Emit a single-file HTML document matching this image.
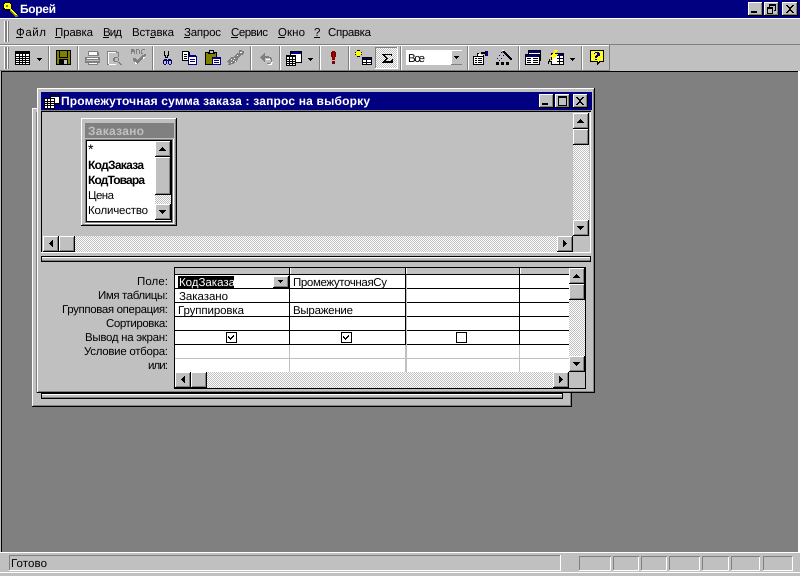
<!DOCTYPE html>
<html><head><meta charset="utf-8"><style>
html,body{margin:0;padding:0;background:#c0c0c0;overflow:hidden}
svg{display:block;position:absolute;left:0;top:0}
text{font-family:"Liberation Sans",sans-serif;font-size:11.5px;fill:#000;text-rendering:geometricPrecision}
.b{font-weight:bold;font-size:12px}
</style></head><body>
<svg width="800" height="576" viewBox="0 0 800 576" shape-rendering="crispEdges" xmlns="http://www.w3.org/2000/svg">
<defs>
<pattern id="d" width="2" height="2" patternUnits="userSpaceOnUse"><rect width="2" height="2" fill="#fff"/><rect width="1" height="1" fill="#c0c0c0"/><rect x="1" y="1" width="1" height="1" fill="#c0c0c0"/></pattern>
<g id="btn"><rect width="16" height="16" fill="#000"/><rect width="15" height="15" fill="#fff"/><rect x="1" y="1" width="14" height="14" fill="#808080"/><rect x="1" y="1" width="13" height="13" fill="#c0c0c0"/></g>
<g id="up"><use href="#btn"/><path d="M4 9h7v1h-7zM5 8h5v1h-5zM6 7h3v1h-3zM7 6h1v1h-1z"/></g>
<g id="dn"><use href="#btn"/><path d="M4 6h7v1h-7zM5 7h5v1h-5zM6 8h3v1h-3zM7 9h1v1h-1z"/></g>
<g id="lf"><use href="#btn"/><path d="M9 4v7h1v-7zM8 5v5h1v-5zM7 6v3h1v-3zM6 7v1h1v-1z"/></g>
<g id="rt"><use href="#btn"/><path d="M6 4v7h1v-7zM7 5v5h1v-5zM8 6v3h1v-3zM9 7v1h1v-1z"/></g>
<g id="tb"><rect width="15" height="14" fill="#000"/><path d="M1 3h13v10h-13z" fill="#fff"/><path d="M1 5h13v1h-13zM1 7h13v1h-13zM1 9h13v1h-13zM1 11h13v1h-13zM4 3h1v10h-1zM7 3h1v10h-1zM10 3h1v10h-1z" fill="#000"/></g>
<g id="mini"><path d="M0 0h5v1h-5zM1 1h3v1h-3zM2 2h1v1h-1z"/></g>
<g id="sep"><rect width="1" height="24" fill="#808080"/><rect x="1" width="1" height="24" fill="#fff"/></g>
</defs>

<!-- Application frame -->
<rect width="800" height="576" fill="#c0c0c0"/>
<rect width="800" height="18" fill="#000080"/>
<rect y="18" width="800" height="1" fill="#fff"/>
<rect y="44" width="800" height="1" fill="#808080"/>
<rect y="45" width="609" height="1" fill="#fff"/>
<rect x="609" y="45" width="1" height="26" fill="#808080"/>
<rect y="70" width="609" height="1" fill="#808080"/>

<!-- title -->
<g transform="translate(2,1)">
<path d="M2 1h6v1h2v6h-1v2h-6v-1h-2v-6h1z" fill="#000" opacity=".75"/>
<path d="M3 2h5v1h1v4h-1v1h-5v-1h-1v-4h1z" fill="#ffff00"/>
<path d="M4 4h2v2h-2z" fill="#808000"/>
<path d="M8 8h1v1h1v1h1v1h1v1h1v1h1v1h2v2h-3v-1h-1v-1h-1v-1h-1v-1h-1v-1h-1z" fill="#808000"/>
<path d="M8 7h1v1h1v1h1v1h1v1h1v1h1v1h1v1h-2v-1h-1v-1h-1v-1h-1v-1h-1z" fill="#ffff00"/>
</g>
<text x="20" y="13" class="b" style="fill:#fff" textLength="36">Борей</text>
<g transform="translate(748,2)"><rect width="15" height="14" fill="#000"/><rect width="14" height="13" fill="#fff"/><rect x="1" y="1" width="13" height="12" fill="#808080"/><rect x="1" y="1" width="12" height="11" fill="#c0c0c0"/><path d="M3 9h6v2h-6z"/></g>
<g transform="translate(764,2)"><rect width="15" height="14" fill="#000"/><rect width="14" height="13" fill="#fff"/><rect x="1" y="1" width="13" height="12" fill="#808080"/><rect x="1" y="1" width="12" height="11" fill="#c0c0c0"/><path d="M5 2h7v7h-2v-1h1v-4h-5v1h-1zM3 5h6v7h-6zM4 7v4h4v-4z" fill-rule="evenodd"/></g>
<g transform="translate(782,2)"><rect width="16" height="14" fill="#000"/><rect width="15" height="13" fill="#fff"/><rect x="1" y="1" width="14" height="12" fill="#808080"/><rect x="1" y="1" width="13" height="11" fill="#c0c0c0"/><path d="M4 3h2v1h1v1h2v-1h1v-1h2v1h-1v1h-1v1h-1v2h1v1h1v1h1v1h-2v-1h-1v-1h-2v1h-1v1h-2v-1h1v-1h1v-1h1v-2h-1v-1h-1v-1h-1z"/></g>

<!-- menu -->
<g><rect x="4" y="21" width="1" height="21" fill="#fff"/><rect x="5" y="21" width="2" height="21" fill="#808080"/><rect x="7" y="21" width="1" height="21" fill="#fff"/><rect x="8" y="21" width="1" height="21" fill="#808080"/></g>
<text x="16" y="36" textLength="30">Файл</text>
<text x="55" y="36" textLength="38">Правка</text>
<text x="103" y="36" textLength="19">Вид</text>
<text x="132" y="36" textLength="42">Вставка</text>
<text x="184" y="36" textLength="37">Запрос</text>
<text x="231" y="36" textLength="37">Сервис</text>
<text x="278" y="36" textLength="27">Окно</text>
<text x="314" y="36">?</text>
<text x="328" y="36" textLength="43">Справка</text>
<path d="M16 37h7v1h-7zM55 37h6v1h-6zM103 37h6v1h-6zM150 37h5v1h-5zM184 37h6v1h-6zM231 37h7v1h-7zM278 37h7v1h-7zM314 37h6v1h-6z"/>

<!-- toolbar grips -->
<g><rect x="4" y="47" width="1" height="22" fill="#fff"/><rect x="5" y="47" width="2" height="22" fill="#808080"/><rect x="7" y="47" width="1" height="22" fill="#fff"/><rect x="8" y="47" width="1" height="22" fill="#808080"/></g>
<!-- separators -->
<use href="#sep" x="48" y="46"/><use href="#sep" x="77" y="46"/><use href="#sep" x="152" y="46"/><use href="#sep" x="250" y="46"/><use href="#sep" x="279" y="46"/><use href="#sep" x="319" y="46"/><use href="#sep" x="348" y="46"/><use href="#sep" x="400" y="46"/><use href="#sep" x="467" y="46"/><use href="#sep" x="518" y="46"/><use href="#sep" x="581" y="46"/>

<!-- icons -->
<use href="#tb" x="15" y="51"/>
<use href="#mini" x="37" y="58"/>
<g transform="translate(56,50)"><rect width="15" height="15" fill="#000"/><rect x="1" y="1" width="13" height="13" fill="#808000"/><rect x="3" y="1" width="9" height="6" fill="#808000"/><rect x="3" y="1" width="1" height="7" fill="#000"/><rect x="11" y="1" width="1" height="7" fill="#000"/><rect x="3" y="7" width="9" height="1" fill="#000"/><rect x="3" y="9" width="9" height="6" fill="#000"/><rect x="8" y="10" width="3" height="4" fill="#c0c0c0"/></g>
<g transform="translate(84,50)"><path d="M4 1h10v1h1v4h-11zM1 7h15v6h-15zM4 13h10v2h-10z" fill="#808080"/><path d="M5 2h8v3h-8zM3 8h11v1h-11zM5 13h8v1h-8z" fill="#fff"/><path d="M2 10h13v1h-13z" fill="#c0c0c0"/></g>
<g transform="translate(107,50)"><path d="M0 1h10v1h2v5h-1v-4h-2v-1h-8v12h7v1h-8z" fill="#808080"/><path d="M1 2h8v1h-8zM1 3h1v11h-1zM2 14h7v1h-7z" fill="#fff"/><path d="M7 7h4v1h1v3h-1v1h-4v-1h-1v-3h1zM8 8v3h3v-3z" fill="#808080" fill-rule="evenodd"/><path d="M12 12h1v1h1v1h1v1h-2v-1h-1v-1h-1v-1z" fill="#808080"/></g>
<g transform="translate(130,49)"><path d="M1 0h3v1h1v4h-1v-2h-2v2h-1zM6 0h3v1h-3zM6 1h1v4h-1zM9 1h1v4h-1zM12 0h3v1h-3zM11 1h1v3h1v1h-2z" fill="#808080"/><path d="M3 9h3v1h1v1h1v-1h1v-1h1v-1h1v-1h1v-1h2v-1h2v2h-1v1h-1v1h-1v1h-1v1h-1v1h-1v1h-1v1h-1v1h-2v-1h-1v-1h-1v-1h-1z" fill="#808080"/><path d="M5 13h1v1h1v1h-2zM13 8h2v1h-1v1h-1z" fill="#fff"/></g>
<g transform="translate(162,51)" fill="#000080"><path d="M2 0h1v4h1v2h1v-2h1v-4h1v5h-1v2h-3v-2h-1z" fill="#000"/><path d="M2 8h3v1h1v-1h3v1h1v4h-1v1h-2v-1h-1v-3h-1v3h-1v1h-2v-1h-1v-4h1zM2 10v3h2v-3zM7 10v3h2v-3z" fill-rule="evenodd"/></g>
<g transform="translate(182,51)"><path d="M0 0h7v1h1v4h-2v5h-6z" fill="#000"/><path d="M1 1h5v8h-5z" fill="#fff"/><path d="M2 3h3v1h-3zM2 5h3v1h-3zM2 7h3v1h-3z"/><path d="M6 4h8v1h1v9h-9z" fill="#000080"/><path d="M7 6h7v7h-7z" fill="#fff"/><path d="M8 8h5v1h-5zM8 10h5v1h-5z" fill="#000080"/></g>
<g transform="translate(205,50)"><path d="M4 0h5v2h3v5h-1v8h-11v-13h4z" fill="#000"/><path d="M1 3h10v11h-10z" fill="#808000"/><path d="M5 1h3v2h-3z" fill="#c0c0c0"/><path d="M3 3h7v1h-7z" fill="#000"/><path d="M7 7h9v8h-9z" fill="#000080"/><path d="M8 9h7v5h-7z" fill="#fff"/><path d="M9 10h5v1h-5zM9 12h5v1h-5z" fill="#000080"/></g>
<g transform="translate(228,50)"><path d="M11 0h3v1h2v3h-1v1h-2v1h-1v1h-1v1h-1v2h-1v2h-2v1h-1v1h-3v1h-3v-1h1v-1h-1v-1h-1v-1h1v-1h1v-1h1v-1h1v-1h3v-1h1v-1h1v-1h1v-1h2z" fill="#808080"/><path d="M3 9h1v1h-1zM5 10h1v1h-1zM3 12h1v1h-1zM6 8h1v1h-1zM7 11h1v1h-1zM12 2h2v1h-2zM9 5h1v1h-1z" fill="#fff"/></g>
<g transform="translate(259,52)"><path d="M5 1h1v9h-1v-1h-1v-1h-1v-1h-1v-1h-1v-1h1v-1h1v-1h1v-1h1zM6 4h4v1h2v1h1v4h-1v1h-1v1h-3v-1h3v-1h1v-3h-1v-1h-6z" fill="#808080"/><path d="M7 7h4v1h-4zM12 10h2v1h-1v2h-4v-1h3z" fill="#fff"/></g>
<g transform="translate(286,51)"><path d="M4 0h12v12h-12z" fill="#000"/><path d="M5 1h10v2h-10z" fill="#000080"/><path d="M5 3h10v8h-10z" fill="#fff"/><path d="M0 4h10v11h-10z" fill="#000"/><path d="M1 6h8v8h-8z" fill="#fff"/><path d="M1 8h8v1h-8zM1 10h8v1h-8zM1 12h8v1h-8zM3 6h1v8h-1zM6 6h1v8h-1z" fill="#000"/></g>
<use href="#mini" x="308" y="58"/>
<g transform="translate(331,50)"><path d="M1 1h3v1h1v5h-1v3h-3v-3h-1v-5h1z" fill="#800000" /><path d="M2 2h1v6h-1z" fill="#c00000"/><path d="M1 11h3v3h-3z" fill="#800000"/></g>
<g transform="translate(355,50)"><path d="M2 0h3v2h2v3h-2v2h-3v-2h-2v-3h2z" fill="#000"/><path d="M3 1h1v2h2v1h-2v2h-1v-2h-2v-1h2z" fill="#ffff00"/><path d="M2 1h3v1h1v1h1v1h-1v1h-1v1h-3v-1h-1v-1h-1v-1h1v-1h1z" fill="#ffff00"/><path d="M7 7h10v8h-10z" fill="#000"/><path d="M8 8h8v1h-8z" fill="#000080"/><path d="M8 10h8v4h-8z" fill="#fff"/><path d="M8 12h8v1h-8zM11 10h1v4h-1z" fill="#000"/></g>
<rect x="375" y="47" width="22" height="22" fill="url(#d)"/>
<path d="M375 47h22v1h-22zM375 47h1v22h-1z" fill="#808080"/><path d="M375 68h23v1h-23zM397 47h1v22h-1z" fill="#fff"/>
<path d="M382 54h10v2h-1v-1h-6v1h1v1h1v1h1v1h-1v1h-1v1h5v-1h1v-1h1v4h-11v-1h1v-1h1v-1h1v-1h1v-1h-1v-1h-1v-1h-1v-1h-1z"/>

<!-- combo -->
<rect x="405" y="49" width="58" height="17" fill="#c0c0c0"/>
<rect x="406" y="50" width="56" height="15" fill="#fff"/>
<rect x="451" y="51" width="11" height="13" fill="#c0c0c0"/><rect x="451" y="64" width="11" height="1" fill="#808080"/><rect x="451" y="51" width="1" height="13" fill="#fff"/>
<use href="#mini" x="454" y="56"/>
<text x="408" y="62" textLength="17">Все</text>

<g transform="translate(473,50)"><path d="M0 6h11v9h-11zM12 1h3v5h-3zM4 3h2v1h2v1h3v1h-7zM8 2h4v2h-4z" fill="#000"/><path d="M13 1h2v5h-2z" fill="#000080"/><path d="M1 7h9v7h-9z" fill="#fff"/><path d="M5 4h3v1h2v1h-5z" fill="#fff"/><path d="M2 8h2v1h-2zM5 8h4v1h-4zM2 10h2v1h-2zM5 10h4v1h-4zM2 12h2v1h-2zM5 12h4v1h-4z"/></g>
<g transform="translate(496,50)"><path d="M6 0h2v1h1v1h1v1h1v1h1v1h1v1h1v1h1v1h1v2h-2v-1h-1v-1h-1v-1h-1v-1h-1v-1h-1v-1h-1v-1h-1z"/><path d="M6 0h2v1h-2z" fill="#fff"/><path d="M5 2h1v1h-1zM3 5h1v1h-1zM7 5h1v1h-1zM1 8h1v1h-1zM5 8h1v1h-1zM3 10h1v1h-1z" fill="#000080"/><path d="M0 12h3v3h-3zM5 12h3v3h-3zM10 12h3v3h-3z" fill="#000"/></g>
<g transform="translate(525,50)"><path d="M3 0h13v11h-13z" fill="#000"/><path d="M4 1h11v2h-11z" fill="#000080"/><path d="M4 3h11v7h-11z" fill="#fff"/><path d="M0 4h15v11h-15z" fill="#000"/><path d="M1 5h13v2h-13z" fill="#000080"/><path d="M1 7h13v7h-13z" fill="#fff"/><path d="M2 8h4v1h-4zM2 10h4v1h-4zM2 12h4v1h-4zM8 8h5v1h-5zM8 10h5v1h-5zM8 12h5v1h-5z" fill="#000"/></g>
<g transform="translate(548,50)"><path d="M3 3h13v12h-13z" fill="#000"/><path d="M4 4h11v2h-11z" fill="#000080"/><path d="M4 6h11v8h-11z" fill="#fff"/><path d="M9 8h6v1h-6zM9 11h6v1h-6zM11 6h1v8h-1z" fill="#000"/><path d="M5 0h5v1h-1v1h-1v1h-1v1h3v1h-1v1h-1v1h-1v1h-1v1h-1v1h-1v1h-1v-1h1v-1h1v-2h-3v-1h1v-1h1v-1h1v-1h1v-1h1z" fill="#ffff00"/><path d="M0 11h1v-2h1v2h1v1h-2v2h-1z" fill="#000"/></g>
<use href="#mini" x="570" y="58"/>
<g transform="translate(590,50)"><path d="M0 0h14v12h-4v1h-1v1h-1v1h-1v-3h-7z" fill="#000"/><path d="M1 1h12v10h-4v1h-1v1h-0v-2h-7z" fill="#ffff00"/><path d="M1 2h1v1h-1zM3 2h1v1h-1zM11 2h1v1h-1zM2 5h1v1h-1zM11 5h1v1h-1zM2 8h1v1h-1zM11 8h1v1h-1z" fill="#fff"/><path d="M5 2h4v1h1v3h-2v1h-1v1h-2v-2h1v-1h1v-2h-2v1h-1v-1h1z" fill="#000080"/><path d="M5 9h2v1h-2z" fill="#000080"/></g>

<!-- MDI -->
<rect x="0" y="71" width="800" height="1" fill="#c0c0c0"/>
<rect x="1" y="71" width="797" height="481" fill="#808080"/>
<rect x="1" y="71" width="797" height="1" fill="#000"/>
<rect x="1" y="71" width="1" height="481" fill="#000"/>
<rect x="798" y="71" width="2" height="481" fill="#fff"/>
<rect x="0" y="552" width="800" height="1" fill="#fff"/>
<rect x="0" y="553" width="800" height="23" fill="#c0c0c0"/>
<rect x="0" y="572" width="800" height="1" fill="#fff"/>

<!-- Status -->
<rect x="9" y="555" width="551" height="16" fill="#c0c0c0"/>
<path d="M9 555h551v1h-551zM9 555h1v16h-1z" fill="#808080"/><path d="M9 570h552v1h-552zM560 555h1v16h-1z" fill="#fff"/>
<text x="11" y="567" textLength="36">Готово</text>
<path d="M579 556h32v1h-32zM579 556h1v15h-1zM613 556h26v1h-26zM613 556h1v15h-1zM641 556h26v1h-26zM641 556h1v15h-1zM669 556h31v1h-31zM669 556h1v15h-1zM702 556h27v1h-27zM702 556h1v15h-1zM731 556h29v1h-29zM731 556h1v15h-1zM763 556h29v1h-29zM763 556h1v15h-1z" fill="#808080"/>
<path d="M610 557h1v14h-1zM579 570h32v1h-32zM638 557h1v14h-1zM613 570h26v1h-26zM666 557h1v14h-1zM641 570h26v1h-26zM699 557h1v14h-1zM669 570h31v1h-31zM728 557h1v14h-1zM702 570h27v1h-27zM759 557h1v14h-1zM731 570h29v1h-29zM792 557h1v14h-1zM763 570h30v1h-30z" fill="#fff"/>

<!-- Back window -->
<rect x="32" y="108" width="540" height="299" fill="#000"/>
<rect x="32" y="108" width="539" height="298" fill="#fff"/>
<rect x="33" y="109" width="538" height="297" fill="#808080"/>
<rect x="33" y="109" width="537" height="296" fill="#c0c0c0"/>
<path d="M36 112h1v281h-1z" fill="#808080"/>
<rect x="41" y="393" width="522" height="6" fill="#000"/><rect x="42" y="394" width="520" height="4" fill="#c0c0c0"/><rect x="42" y="394" width="520" height="1" fill="#fff"/><rect x="42" y="397" width="520" height="1" fill="#808080"/>

<!-- Front window -->
<rect x="37" y="88" width="558" height="305" fill="#000"/>
<rect x="37" y="88" width="557" height="304" fill="#fff"/>
<rect x="38" y="89" width="556" height="303" fill="#808080"/>
<rect x="38" y="89" width="555" height="302" fill="#c0c0c0"/>
<rect x="41" y="92" width="551" height="18" fill="#000080"/>
<g transform="translate(44,94)"><path d="M6 0h10v10h-10z" fill="#000"/><path d="M7 1h8v2h-8z" fill="#000080"/><path d="M7 3h8v6h-8z" fill="#fff"/><path d="M0 4h11v11h-11z" fill="#000"/><path d="M1 5h9v9h-9z" fill="#fff"/><path d="M1 7h9v1h-9zM1 9h9v1h-9zM1 11h9v1h-9zM3 5h1v9h-1zM6 5h1v9h-1z" fill="#000"/></g>
<text x="61" y="105" class="b" style="fill:#fff" textLength="309">Промежуточная сумма заказа : запрос на выборку</text>
<g transform="translate(539,94)"><rect width="15" height="14" fill="#000"/><rect width="14" height="13" fill="#fff"/><rect x="1" y="1" width="13" height="12" fill="#808080"/><rect x="1" y="1" width="12" height="11" fill="#c0c0c0"/><path d="M3 9h6v2h-6z"/></g>
<g transform="translate(555,94)"><rect width="15" height="14" fill="#000"/><rect width="14" height="13" fill="#fff"/><rect x="1" y="1" width="13" height="12" fill="#808080"/><rect x="1" y="1" width="12" height="11" fill="#c0c0c0"/><path d="M3 2h9v10h-9zM4 4v7h7v-7z" fill-rule="evenodd"/></g>
<g transform="translate(573,94)"><rect width="15" height="14" fill="#000"/><rect width="14" height="13" fill="#fff"/><rect x="1" y="1" width="13" height="12" fill="#808080"/><rect x="1" y="1" width="12" height="11" fill="#c0c0c0"/><path d="M3 3h2v1h1v1h2v-1h1v-1h2v1h-1v1h-1v1h-1v2h1v1h1v1h1v1h-2v-1h-1v-1h-2v1h-1v1h-2v-1h1v-1h1v-1h1v-2h-1v-1h-1v-1h-1z"/></g>

<!-- Client -->
<rect x="41" y="110" width="550" height="1" fill="#808080"/>
<rect x="41" y="111" width="550" height="1" fill="#000"/>
<rect x="41" y="111" width="1" height="142" fill="#000"/>
<rect x="42" y="112" width="531" height="124" fill="#c0c0c0"/>
<rect x="590" y="112" width="1" height="141" fill="#fff"/>
<rect x="41" y="252" width="550" height="1" fill="#fff"/>
<!-- upper scroll v -->
<rect x="573" y="113" width="16" height="123" fill="url(#d)"/>
<use href="#up" x="573" y="113"/><use href="#btn" x="573" y="129"/><use href="#dn" x="573" y="220"/>
<rect x="573" y="236" width="16" height="16" fill="#c0c0c0"/>
<!-- upper scroll h -->
<rect x="43" y="236" width="530" height="16" fill="url(#d)"/>
<use href="#lf" x="43" y="236"/><use href="#btn" x="59" y="236"/><use href="#rt" x="557" y="236"/>

<!-- Table box -->
<rect x="81" y="118" width="96" height="108" fill="#000"/>
<rect x="81" y="118" width="95" height="107" fill="#fff"/>
<rect x="82" y="119" width="94" height="106" fill="#808080"/>
<rect x="82" y="119" width="93" height="105" fill="#c0c0c0"/>
<rect x="85" y="123" width="89" height="15" fill="#808080"/>
<text x="88" y="135" class="b" style="fill:#c0c0c0" textLength="56">Заказано</text>
<rect x="85" y="139" width="88" height="84" fill="#808080"/>
<rect x="86" y="140" width="86" height="82" fill="#000"/>
<rect x="87" y="141" width="84" height="80" fill="#fff"/>
<rect x="173" y="139" width="1" height="85" fill="#fff"/>
<rect x="85" y="223" width="89" height="1" fill="#fff"/>
<text x="88" y="154" style="font-size:14px">*</text>
<text x="88" y="169" class="b" textLength="56">КодЗаказа</text>
<text x="88" y="184" class="b" textLength="57">КодТовара</text>
<text x="88" y="199" textLength="26">Цена</text>
<text x="88" y="214" textLength="60">Количество</text>
<rect x="155" y="141" width="16" height="79" fill="url(#d)"/>
<use href="#up" x="155" y="141"/>
<g transform="translate(155,157)"><rect width="16" height="38" fill="#000"/><rect width="15" height="37" fill="#fff"/><rect x="1" y="1" width="14" height="36" fill="#808080"/><rect x="1" y="1" width="13" height="35" fill="#c0c0c0"/></g>
<use href="#dn" x="155" y="204"/>

<!-- Splitter -->
<rect x="41" y="256" width="550" height="6" fill="#000"/>
<rect x="42" y="257" width="548" height="4" fill="#c0c0c0"/>
<rect x="42" y="257" width="548" height="1" fill="#fff"/><rect x="42" y="260" width="548" height="1" fill="#808080"/>

<!-- Labels -->
<text x="137" y="285" textLength="31">Поле:</text>
<text x="98" y="299" textLength="70">Имя таблицы:</text>
<text x="62" y="313" textLength="106">Групповая операция:</text>
<text x="106" y="327" textLength="62">Сортировка:</text>
<text x="85" y="341" textLength="83">Вывод на экран:</text>
<text x="84" y="355" textLength="84">Условие отбора:</text>
<text x="148" y="369" textLength="20">или:</text>

<!-- Grid -->
<rect x="174" y="267" width="412" height="122" fill="#000"/>
<rect x="175" y="268" width="394" height="6" fill="#c0c0c0"/>
<rect x="175" y="275" width="394" height="97" fill="#fff"/>
<path d="M175 274h394v1h-394zM175 288h394v1h-394zM175 302h394v1h-394zM175 316h394v1h-394zM175 330h394v1h-394zM175 344h394v1h-394z" fill="#000"/>
<rect x="175" y="358" width="394" height="1" fill="#c0c0c0"/>
<path d="M289 268h1v77h-1zM405 268h1v77h-1zM519 268h1v77h-1z" fill="#000"/>
<path d="M290 268h1v6h-1zM406 268h1v6h-1zM520 268h1v6h-1z" fill="#fff"/>
<path d="M289 345h1v27h-1zM405 345h1v27h-1zM519 345h1v27h-1z" fill="#c0c0c0"/>
<rect x="406" y="275" width="1" height="97" fill="#c0c0c0"/>
<rect x="178" y="276" width="56" height="12" fill="#000"/>
<rect x="273" y="276" width="16" height="12" fill="#000"/><rect x="273" y="276" width="15" height="11" fill="#fff"/><rect x="274" y="277" width="14" height="10" fill="#808080"/><rect x="274" y="277" width="13" height="9" fill="#c0c0c0"/>
<use href="#mini" x="278" y="280"/>
<text x="179" y="286" style="fill:#fff" textLength="56">КодЗаказа</text>
<text x="293" y="286" textLength="94">ПромежуточнаяСу</text>
<text x="179" y="300" textLength="49">Заказано</text>
<text x="178" y="314" textLength="66">Группировка</text>
<text x="293" y="314" textLength="60">Выражение</text>
<g id="c1" transform="translate(226,332)"><rect width="11" height="11" fill="#000"/><rect x="1" y="1" width="9" height="9" fill="#fff"/><path d="M2 4h1v1h1v1h1v-1h1v-1h1v-1h1v2h-1v1h-1v1h-1v1h-1v-1h-1v-1h-1z"/></g>
<use href="#c1" x="115"/>
<g transform="translate(456,332)"><rect width="11" height="11" fill="#000"/><rect x="1" y="1" width="9" height="9" fill="#fff"/></g>

<!-- lower scroll -->
<rect x="569" y="268" width="16" height="104" fill="url(#d)"/>
<use href="#up" x="569" y="268"/><use href="#btn" x="569" y="284"/><use href="#dn" x="569" y="356"/>
<rect x="175" y="372" width="378" height="16" fill="url(#d)"/>
<use href="#lf" x="175" y="372"/><use href="#btn" x="191" y="372"/><use href="#rt" x="553" y="372"/>
<rect x="569" y="372" width="16" height="16" fill="#c0c0c0"/>
</svg>
</body></html>
